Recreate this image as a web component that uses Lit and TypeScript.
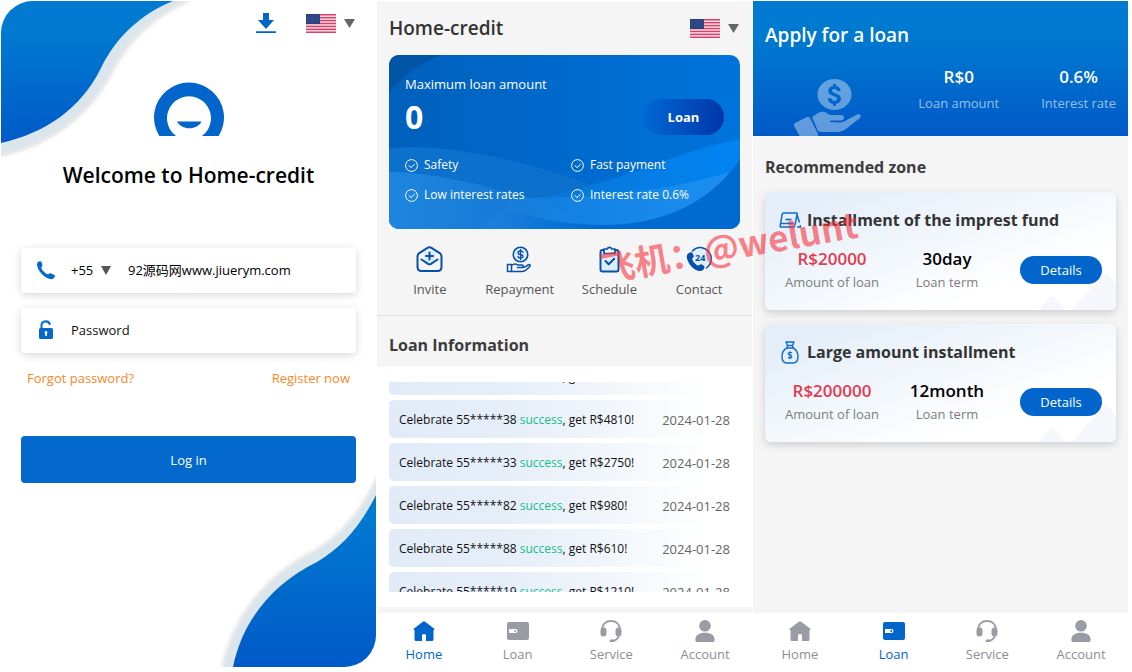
import { LitElement, html, css, svg } from "lit";
import { customElement, property } from "lit/decorators.js";
import { classMap } from "lit/directives/class-map.js";

const base = css`
  * {
    box-sizing: border-box;
  }
  :host {
    display: block;
    font-family: "Open Sans", "Noto Sans CJK SC", sans-serif;
    font-size: 13px;
    line-height: 20px;
  }
  h1,
  h2,
  h3,
  p,
  dl,
  dd,
  ul {
    margin: 0;
    padding: 0;
  }
  ul {
    list-style: none;
  }
  button,
  input,
  select {
    font: inherit;
    color: inherit;
    border: 0;
    margin: 0;
    padding: 0;
    background: none;
  }
  button {
    cursor: pointer;
  }
  a {
    color: inherit;
    text-decoration: none;
  }
  svg {
    display: block;
    flex: none;
  }
  .language {
    display: flex;
    align-items: center;
    gap: 8px;
  }
`;

const languageButton = html`
  <button class="language" type="button" aria-label="Language">
    <svg width="30" height="19" viewBox="0 0 30 19">
      <rect width="30" height="19" fill="#fbe3ea" />
      ${[0, 1, 2, 3, 4, 5, 6].map(
        (i) => svg`<rect y=${i * 2.92} width="30" height="1.5" fill="#d9416a" />`
      )}
      <rect width="14" height="10" fill="#27417f" />
      <path d="M2 2h11M1 4h12M2 6h11M1 8h12" stroke="#6478a8" stroke-width=".7" stroke-dasharray="1 1.5" />
    </svg>
    <svg width="11" height="9" viewBox="0 0 11 9"><path d="M0 0h11L5.500 9z" fill="#666" /></svg>
  </button>
`;

const check = html`
  <svg width="13" height="13" viewBox="0 0 13 13" fill="none" stroke="#fff">
    <circle cx="6.5" cy="6.5" r="5.9" />
    <path d="M3.700 6.300l2.300 2.300 3.800-3.600" />
  </svg>
`;

type Tab = "home" | "loan" | "service" | "account";

const tabs: { id: Tab; label: string; icon: unknown }[] = [
  {
    id: "home",
    label: "Home",
    icon: svg`<path fill="currentColor" fill-rule="evenodd" d="M10.200 1.500a1.300 1.300 0 0 1 1.600 0l9.500 7.300c.6.5.2 1.200-.4 1.200h-.4v9.500a1.500 1.500 0 0 1-1.500 1.500H3a1.500 1.500 0 0 1-1.500-1.500V10h-.4c-.6 0-1-.7-.4-1.200zM9 21h4v-5.500q0-1.500-1.500-1.500h-1Q9 14 9 15.500z"/>`,
  },
  {
    id: "loan",
    label: "Loan",
    icon: svg`<rect y="2" width="22" height="18" rx="2" fill="currentColor"/><path fill="#fff" d="M2 9h6.500a2 2 0 0 1 0 4H2z"/><circle cx="8.200" cy="11" r="1" fill="currentColor"/>`,
  },
  {
    id: "service",
    label: "Service",
    icon: svg`<path d="M2.200 9.500C2.200 4 6 1 11 1s8.800 3 8.800 8.500M19 15c-.8 3.500-3 5.500-6.500 6" fill="none" stroke="currentColor" stroke-width="1.800"/><rect x=".5" y="7.500" width="6" height="9" rx="3" fill="currentColor"/><rect x="15.500" y="7.500" width="6" height="9" rx="3" fill="currentColor"/><ellipse cx="12" cy="20.700" rx="2.500" ry="1.500" fill="currentColor"/>`,
  },
  {
    id: "account",
    label: "Account",
    icon: svg`<circle cx="11" cy="5.800" r="5.800" fill="currentColor"/><path fill="currentColor" d="M1.300 20c0-5 4-7.300 9.700-7.300s9.700 2.300 9.700 7.300c0 1.300-.7 2-2 2H3.300c-1.300 0-2-.7-2-2z"/>`,
  },
];

@customElement("tab-bar")
class TabBar extends LitElement {
  @property() active: Tab = "home";

  static styles = [
    base,
    css`
      .bar {
        display: grid;
        grid-template-columns: repeat(4, 1fr);
        height: 54px;
        padding-top: 7px;
        background: #fff;
        color: #9a9ba5;
      }
      .tab {
        display: flex;
        flex-direction: column;
        align-items: center;
        gap: 2px;
      }
      .label {
        color: #8e8e93;
      }
      .active,
      .active .label {
        color: #0165cc;
      }
    `,
  ];

  render() {
    return html`<nav class="bar">
      ${tabs.map(
        (tab) => html`<a
          href="#${tab.id}"
          class=${classMap({ tab: true, active: tab.id === this.active })}
        >
          <svg width="22" height="22" viewBox="0 0 22 22">${tab.icon}</svg>
          <span class="label">${tab.label}</span>
        </a>`
      )}
    </nav>`;
  }
}

@customElement("login-screen")
class LoginScreen extends LitElement {
  static styles = [
    base,
    css`
      :host {
        display: grid;
        grid-template: 1fr / 1fr;
        overflow: hidden;
        border-radius: 32px 0 32px 0;
        background: #fff;
      }
      .decor,
      .content {
        grid-area: 1 / 1;
        min-width: 0;
      }
      .decor {
        display: flex;
        flex-direction: column;
        justify-content: space-between;
      }
      .bottom {
        align-self: flex-end;
      }
      .content {
        z-index: 1;
        padding: 12px 20px;
      }
      .top {
        display: flex;
        justify-content: flex-end;
        align-items: center;
        gap: 30px;
        padding-right: 1px;
        height: 20px;
      }
      .logo {
        margin: 49px auto 0;
      }
      .title {
        margin-top: 22px;
        text-align: center;
        font-size: 21px;
        line-height: 32px;
        font-weight: 600;
      }
      .form {
        display: grid;
        gap: 15px;
        margin-top: 57px;
      }
      .field {
        display: flex;
        align-items: center;
        height: 45px;
        padding: 0 15px 1px;
        border-radius: 4px;
        background: #fff;
        box-shadow: 0 2px 8px rgba(0, 0, 0, 0.16);
      }
      .icon {
        width: 35px;
      }
      .prefix {
        display: flex;
        align-items: center;
        gap: 4px;
        margin-right: 17px;
      }
      .code {
        appearance: none;
        width: 26px;
      }
      .input {
        flex: 1;
        min-width: 0;
        outline: 0;
      }
      .input::placeholder {
        color: #111;
        opacity: 1;
      }
      .links {
        display: flex;
        justify-content: space-between;
        padding: 0 6px;
        color: #f5892a;
      }
      .submit {
        height: 47px;
        margin-top: 33px;
        border-radius: 4px;
        background: #0369cd;
        color: #fff;
      }
    `,
  ];

  render() {
    return html`
      <div class="decor" aria-hidden="true">
        <svg width="200" height="165" viewBox="0 0 200 165">
          <defs>
            <linearGradient id="top" x1="0" y1="0" x2="0" y2="1">
              <stop offset=".2" stop-color="#007ad0" />
              <stop offset="1" stop-color="#005ac8" />
            </linearGradient>
            <filter id="soft"><feDropShadow dx="1" dy="2" stdDeviation="2" flood-opacity=".15" /></filter>
          </defs>
          <path
            d="M-20 -20H205L186 -2C148 16 124 42 109 71C88 112 50 141 -1 153H-20z"
            fill="#dbe5ec"
            filter="url(#soft)"
          />
          <path d="M0 0H172C140 13 115 36 100 67C80 108 44 132 0 142z" fill="url(#top)" />
        </svg>
        <svg class="bottom" width="160" height="194" viewBox="0 0 160 194">
          <defs>
            <linearGradient id="low" x1="0" y1="0" x2="0" y2="1">
              <stop offset=".1" stop-color="#007ad0" />
              <stop offset="1" stop-color="#005ac8" />
            </linearGradient>
            <filter id="softer"><feDropShadow dx="-1" dy="-1" stdDeviation="2" flood-opacity=".15" /></filter>
          </defs>
          <path
            d="M180 -20L160 9C144 42 124 65 97 80C50 104 17 145 6 200H180z"
            fill="#dbe5ec"
            filter="url(#softer)"
          />
          <path d="M160 22C144 54 126 74 101 89C54 112 26 150 17 194H160z" fill="url(#low)" />
        </svg>
      </div>
      <div class="content">
        <div class="top">
          <button type="button" aria-label="Download">
            <svg width="20" height="20" viewBox="0 0 20 20">
              <path d="M7 0h6v7h5l-8 9-8-9h5zM0 18.300h20V20H0z" fill="#0165cc" />
            </svg>
          </button>
          ${languageButton}
        </div>
        <svg class="logo" width="70" height="55" viewBox="0 0 70 55">
          <path
            d="M5.300 54A35 35 0 1 1 64.700 54H48A22 22 0 1 0 22 54zM23 39.500H47.500C43.500 48.500 27.500 48.500 23 39.500z"
            fill="#0165cc"
          />
        </svg>
        <h1 class="title">Welcome to Home-credit</h1>
        <form class="form">
          <div class="field">
            <span class="icon">
              <svg width="20" height="20" viewBox="0 0 20 20">
                <path
                  d="M3.500 1.200L5 1.500c.7.200 1.500 3 1.400 4.300C6.300 6.600 5 7.200 5.400 8.200c1.200 2.800 3.600 4.800 6 6 1 .4 1.500-.8 2.500-1 1.200 0 4.800 1.600 5 2.300.3 1.500-1.400 3.600-3 3.700C9.500 19.500 1.500 11 1 5 .900 3 1.800 1.500 3.500 1.200z"
                  fill="#0569cc"
                />
              </svg>
            </span>
            <span class="prefix">
              <select class="code" aria-label="Country code"><option>+55</option></select>
              <svg width="10" height="9" viewBox="0 0 10 9"><path d="M0 0h10L5 9z" fill="#555" /></svg>
            </span>
            <input class="input" aria-label="Phone number" value="92源码网www.jiuerym.com" />
          </div>
          <label class="field">
            <span class="icon">
              <svg width="20" height="20" viewBox="0 0 20 20">
                <path d="M5.500 9V5.500a4.300 4.300 0 0 1 8.500-.8" fill="none" stroke="#0e74cf" stroke-width="2.200" />
                <rect x="3" y="8" width="14" height="11" rx="1.500" fill="#0767ca" />
                <path d="M10 11a1.500 1.500 0 0 1 .8 2.700V16H9.200v-2.300A1.500 1.500 0 0 1 10 11z" fill="#fff" />
              </svg>
            </span>
            <input class="input" type="password" placeholder="Password" aria-label="Password" />
          </label>
          <div class="links">
            <a href="#forgot">Forgot password?</a>
            <a href="#register">Register now</a>
          </div>
          <button class="submit" type="button">Log in</button>
        </form>
      </div>
    `;
  }
}

const shortcuts = [
  {
    label: "Invite",
    icon: svg`<path fill="#dfeeff" stroke="none" d="M8 5h12v10l-6 4-6-4z"/><path d="M1.500 10.500c0-1.500.6-2.500 1.800-3.300l8.200-5.300c1.300-.8 2.700-.8 4 0l8.200 5.300c1.200.8 1.800 1.800 1.800 3.300v10.500c0 2.500-1.500 4-4 4h-16c-2.500 0-4-1.500-4-4z" fill="none" stroke-width="2"/><path d="M5.500 13.500l6.500 4.300c1 .6 2 .6 3 0l6.500-4.300M13.500 6.500v7M10 10h7" fill="none" stroke-width="2"/>`,
  },
  {
    label: "Repayment",
    icon: svg`<circle cx="14.500" cy="8.500" r="7.300" fill="#dfeeff" stroke-width="1.600"/><path d="M17 6.300c-.5-1-1.300-1.300-2.500-1.300-3.300 0-3.300 3.200 0 3.500s3.300 3.500 0 3.500c-1.400 0-2.300-.5-2.600-1.500M14.500 3.500v10" fill="none" stroke-width="1.300"/><path d="M1.500 18.500h4v7h-4zM5.500 19.500c2-1.500 4.500-1.700 6-.5h4.500c1.800 0 1.800 2.400 0 2.400h-4.500M16.500 21.400c3-.2 4.500-2 6-2.700 1.400-.5 2.300.5 1.200 1.700-3 3.400-5 5.100-7.700 5.100H5.500" fill="none" stroke-width="1.500"/>`,
  },
  {
    label: "Schedule",
    icon: svg`<rect x="4.500" y="4" width="18" height="21.500" rx="2" fill="#dfeeff" stroke-width="1.900"/><path d="M8 3h3.300a2.300 2.300 0 0 1 4.400 0H19v4.500H8z" fill="#eef5ff" stroke-width="1.700"/><path d="M9.500 15l3.200 3.300 5.500-5.500" fill="none" stroke-width="2"/>`,
  },
  {
    label: "Contact",
    icon: svg`<circle cx="15" cy="12" r="9.500" fill="#dfeeff" stroke="none"/><path d="M6.500 5a11 11 0 0 1 18.800 7A11.500 11.500 0 0 1 20.500 22" fill="none" stroke-width="1.500" stroke-dasharray="14 1.200"/><path d="M3 7c1.500-1 3-1 3.700.6l1 2.400c.4 1.200-1.500 2-1.500 3 .3 2 3.300 5.500 5.500 6.500 1.400.4 2.200-1.600 3.600-1.200 1.300.4 2.600 1.300 3.200 2.500.5 1.800-1.800 4.300-4 4.300C8.500 25.500 1 17 .7 10.800c0-1.700.8-3 2.300-3.800z" fill="#0550ad" stroke="none"/><text x="9" y="15" font-size="9" font-weight="700" fill="#0550ad" stroke="none">24</text>`,
  },
];

const payouts = [
  { phone: "55*****61", amount: "R$3200" },
  { phone: "55*****38", amount: "R$4810" },
  { phone: "55*****33", amount: "R$2750" },
  { phone: "55*****82", amount: "R$980" },
  { phone: "55*****88", amount: "R$610" },
  { phone: "55*****19", amount: "R$1210" },
];

@customElement("home-screen")
class HomeScreen extends LitElement {
  static styles = [
    base,
    css`
      :host {
        display: flex;
        flex-direction: column;
        background: #f5f5f5;
        color: #333;
      }
      .header {
        display: flex;
        align-items: center;
        justify-content: space-between;
        height: 54px;
        padding: 0 13px 0 12px;
      }
      .title {
        font-size: 19px;
        line-height: 28px;
        font-weight: 600;
      }
      .card {
        display: grid;
        margin: 0 12px;
        height: 174px;
        border-radius: 10px;
        overflow: hidden;
        color: #fff;
      }
      .waves,
      .body {
        grid-area: 1 / 1;
        width: 100%;
        min-width: 0;
      }
      .waves {
        height: 174px;
      }
      .body {
        display: flex;
        flex-direction: column;
        padding: 19px 16px 0;
        z-index: 1;
      }
      .amount {
        display: flex;
        align-items: center;
        justify-content: space-between;
        height: 46px;
        font-size: 32px;
        font-weight: 700;
      }
      .loan {
        width: 81px;
        height: 36px;
        border-radius: 18px;
        background: linear-gradient(90deg, #0068d6, #0136a8);
        font-size: 13px;
        font-weight: 700;
      }
      .perks {
        display: grid;
        grid-template-columns: 166px 1fr;
        row-gap: 10px;
        margin-top: 15px;
        font-size: 12px;
        font-weight: 500;
      }
      .perk {
        display: flex;
        align-items: center;
        gap: 6px;
      }
      .shortcuts {
        display: grid;
        grid-template-columns: repeat(4, 1fr);
        padding: 17px 8px 16px;
        border-bottom: 1px solid #e0e0e0;
      }
      .shortcut {
        display: flex;
        flex-direction: column;
        align-items: center;
        gap: 6px;
        color: #555;
      }
      .shortcut svg {
        stroke: #0550ad;
      }
      .section {
        padding: 15px 12px;
        font-size: 16px;
        line-height: 28px;
        height: 51px;
        font-weight: 700;
        color: #3c3c3c;
      }
      .feed {
        flex: 1;
        padding: 15px 12px;
        margin-bottom: 6px;
        background: #fff;
      }
      .viewport {
        height: 210px;
        overflow: hidden;
      }
      .list {
        display: grid;
        gap: 5px;
        margin-top: -25px;
      }
      .row {
        display: flex;
        align-items: center;
        justify-content: space-between;
        height: 38px;
        padding: 1px 10px 0;
        border-radius: 5px;
        background: linear-gradient(90deg, #e1ebf7, #e6eef8 35%, #fff 92%);
        font-size: 12px;
        color: #111;
      }
      .ok {
        color: #13c08c;
      }
      .date {
        color: #666;
        font-size: 13px;
      }
    `,
  ];

  render() {
    return html`
      <header class="header">
        <h1 class="title">Home-credit</h1>
        ${languageButton}
      </header>
      <section class="card">
        <svg class="waves" viewBox="0 0 351 174" preserveAspectRatio="none" aria-hidden="true">
          <defs>
            <linearGradient id="sky" x1="0" y1="0" x2="1" y2="0">
              <stop offset="0" stop-color="#0060bc" />
              <stop offset="1" stop-color="#0073dc" />
            </linearGradient>
            <linearGradient id="foam" x1="0" y1="0" x2="1" y2="0">
              <stop offset="0" stop-color="#1f86df" />
              <stop offset="1" stop-color="#1f86df" stop-opacity="0" />
            </linearGradient>
            <linearGradient id="bright" x1="0" y1="0" x2="1" y2="0">
              <stop offset="0" stop-color="#0a74d4" />
              <stop offset="1" stop-color="#0084f2" />
            </linearGradient>
            <linearGradient id="crest" x1="0" y1="0" x2="1" y2="0">
              <stop offset="0" stop-color="#1b86e4" stop-opacity=".3" />
              <stop offset="1" stop-color="#1d8ef0" />
            </linearGradient>
            <linearGradient id="deep" x1="0" y1="0" x2="1" y2="0">
              <stop offset="0" stop-color="#006ad0" stop-opacity="0" />
              <stop offset=".4" stop-color="#006ad0" />
            </linearGradient>
          </defs>
          <rect width="351" height="174" fill="url(#sky)" />
          <path d="M0 0H52C30 9 14 20 0 38z" fill="#0055a7" />
          <path d="M0 93C65 88 130 105 202 130C240 142 290 140 320 134L300 174H0z" fill="#0c70cd" />
          <path d="M202 130C255 117 290 96 351 84V174H150C150 160 145 150 139 143C165 141 185 136 202 130z" fill="url(#bright)" />
          <path d="M122 143C210 143 280 136 340 117L330 174H90z" fill="url(#crest)" />
          <path d="M0 117C50 118 90 130 122 138C150 145 180 158 215 174H0z" fill="url(#foam)" />
          <path d="M351 104C320 150 270 170 215 170C180 170 150 165 110 152V174H351z" fill="url(#deep)" />
        </svg>
        <div class="body">
          <p>Maximum loan amount</p>
          <div class="amount">
            <span>0</span>
            <button class="loan" type="button">Loan</button>
          </div>
          <ul class="perks">
            ${["Safety", "Fast payment", "Low interest rates", "Interest rate 0.6%"].map(
              (text) => html`<li class="perk">${check}<span>${text}</span></li>`
            )}
          </ul>
        </div>
      </section>
      <nav class="shortcuts">
        ${shortcuts.map(
          (s) => html`<a class="shortcut" href="#${s.label.toLowerCase()}">
            <svg width="27" height="27" viewBox="0 0 27 27" stroke-linejoin="round" stroke-linecap="round">
              ${s.icon}
            </svg>
            <span>${s.label}</span>
          </a>`
        )}
      </nav>
      <h2 class="section">Loan Information</h2>
      <section class="feed">
        <div class="viewport">
          <ul class="list">
            ${payouts.map(
              (p) => html`<li class="row">
                <span>Celebrate ${p.phone} <span class="ok">success</span>, get ${p.amount}!</span>
                <time class="date">2024-01-28</time>
              </li>`
            )}
          </ul>
        </div>
      </section>
      <tab-bar active="home"></tab-bar>
    `;
  }
}

const products = [
  {
    name: "Installment of the imprest fund",
    amount: "R$20000",
    term: "30day",
    icon: svg`<path d="M16 18H2.200Q1 18 1.200 16.800L3.200 5.200Q3.500 4 4.700 4h12.600q1 0 .8 1l-2 10.500q-.2 1-1.200 1M2 14.500h13M17.500 4l3 9.500" stroke-width="1.500"/><path d="M6.500 10.500h6" stroke-width="1.600"/><path d="M18 18h3.500v-2" stroke-width="1.600"/>`,
  },
  {
    name: "Large amount installment",
    amount: "R$200000",
    term: "12month",
    icon: svg`<path d="M7 1h8l-1.500 3.500h-5zM7 7h8M8.500 4.500L8 7C5 8.500 3 12 3 15.500 3 20 5 22 8 22h6c3 0 5-2 5-6.500C19 12 17 8.500 14 7l-.5-2.500" stroke-width="1.400"/><path d="M13 12.300c-.5-.8-1-1-2-1-2.500 0-2.500 2.500 0 2.800s2.500 2.900 0 2.900c-1 0-1.800-.4-2-1.200M11 10.200v8" stroke-width="1.100"/>`,
  },
];

@customElement("loan-screen")
class LoanScreen extends LitElement {
  static styles = [
    base,
    css`
      :host {
        display: flex;
        flex-direction: column;
        background: #f5f5f5;
        color: #333;
      }
      .hero {
        height: 135px;
        padding: 20px 12px 0;
        overflow: hidden;
        background: linear-gradient(#007ad0 25%, #005ac8);
        color: #fff;
      }
      .title {
        font-size: 19px;
        line-height: 28px;
        font-weight: 600;
      }
      .summary {
        display: flex;
        align-items: flex-start;
        gap: 42px;
        padding-top: 16px;
      }
      .hand {
        margin: 14px auto 0 29px;
      }
      .stat {
        display: flex;
        flex-direction: column-reverse;
        align-items: center;
        gap: 1px;
      }
      .stat dd {
        font-size: 17px;
        line-height: 24px;
        font-weight: 600;
      }
      .hero .stat {
        gap: 4px;
      }
      .hero dt {
        color: rgba(255, 255, 255, 0.6);
      }
      .section {
        padding: 17px 12px 11px;
        font-size: 16px;
        line-height: 28px;
        font-weight: 700;
        color: #3c3c3c;
      }
      .products {
        display: grid;
        gap: 14px;
        flex: 1;
        align-content: start;
        padding: 0 12px;
      }
      .product {
        display: grid;
        border-radius: 6px;
        background: linear-gradient(160deg, #e4eef8 10%, #fff 75%);
        box-shadow: 0 3px 8px rgba(0, 0, 0, 0.16);
      }
      .peaks,
      .detail {
        grid-area: 1 / 1;
      }
      .peaks {
        place-self: end;
      }
      .detail {
        z-index: 1;
        height: 118px;
        padding: 14px 14px 0;
      }
      .name {
        display: flex;
        align-items: center;
        gap: 6px;
        font-size: 16px;
        line-height: 28px;
        font-weight: 700;
      }
      .name svg {
        fill: none;
        stroke: #0e6ccd;
        stroke-linejoin: round;
      }
      .figures {
        display: grid;
        grid-template-columns: 106fr 124fr 93fr;
        align-items: center;
        margin-top: 13px;
      }
      .figures dt {
        color: #7d7d7d;
      }
      .figures dd {
        color: #000;
      }
      .figures .money {
        color: #e53950;
      }
      .details {
        justify-self: end;
        width: 82px;
        height: 28px;
        border-radius: 14px;
        background: #0165cc;
        color: #fff;
      }
    `,
  ];

  render() {
    return html`
      <header class="hero">
        <h1 class="title">Apply for a loan</h1>
        <dl class="summary">
          <svg class="hand" width="68" height="60" viewBox="0 0 68 60" aria-hidden="true">
            <g fill="#fff" fill-opacity=".38">
              <path
                fill-rule="evenodd"
                d="M40.500 0a17 15.500 0 1 0 .01 0zM42 5v2c3 .5 4.500 2.300 4.700 5h-3.500c-1-3.500-5.700-2.500-5 .2.800 2.300 8.800 2.300 8.800 7.300 0 3-2 4.800-5 5.300v2h-3v-2c-3.300-.5-5-2.300-5.200-5.500h3.500c1 3.800 6.200 3 5.700 0-.6-2.600-8.700-2-8.700-7.200 0-2.800 1.700-4.500 4.700-5V5z"
              />
              <path d="M1 44l12-6q2-.5 3 1l8 16q.5 2-1 3l-11 6q-2 .5-3-1L0 47q-.5-2 1-3z" />
              <path
                d="M18 38l6-4q3-2 7-1l5 3h11c4 0 4 5 0 5.500H37q-2 .5-1 1.500l10 .5q3 0 6-2l11-6c3-1 5 1 3 3.500L52 50q-4 3-8 3H27l-3-1z"
              />
            </g>
          </svg>
          <div class="stat"><dt>Loan amount</dt><dd>R$0</dd></div>
          <div class="stat"><dt>Interest rate</dt><dd>0.6%</dd></div>
        </dl>
      </header>
      <h2 class="section">Recommended zone</h2>
      <div class="products">
        ${products.map(
          (p) => html`<article class="product">
            <svg class="peaks" width="78" height="38" viewBox="0 0 78 38" aria-hidden="true">
              <path d="M0 38l13-14q2-1 4 1l11 13zM33 38L66 2q2-2 4 0l8 11v19q0 6-6 6z" fill="#f5f7fd" />
            </svg>
            <div class="detail">
              <h3 class="name">
                <svg width="22" height="23" viewBox="0 0 22 23">${p.icon}</svg>
                ${p.name}
              </h3>
              <dl class="figures">
                <div class="stat"><dt>Amount of loan</dt><dd class="money">${p.amount}</dd></div>
                <div class="stat"><dt>Loan term</dt><dd>${p.term}</dd></div>
                <button class="details" type="button">Details</button>
              </dl>
            </div>
          </article>`
        )}
      </div>
      <tab-bar active="loan"></tab-bar>
    `;
  }
}

@customElement("app-root")
class AppRoot extends LitElement {
  static styles = [
    base,
    css`
      :host {
        background: #fff;
        overflow: hidden;
      }
      .screens {
        display: grid;
        grid-template-columns: repeat(3, 1fr);
        gap: 1px;
        min-height: 100vh;
        padding: 1px 4px 5px 1px;
      }
      .watermark {
        position: absolute;
        left: 598px;
        top: 221px;
        z-index: 2;
        font-family: "Noto Sans CJK SC", sans-serif;
        font-size: 35px;
        line-height: 48px;
        font-weight: 700;
        white-space: nowrap;
        color: rgba(250, 50, 60, 0.6);
        transform: rotate(-10deg);
        pointer-events: none;
      }
    `,
  ];

  render() {
    return html`
      <main class="screens">
        <login-screen></login-screen>
        <home-screen></home-screen>
        <loan-screen></loan-screen>
      </main>
      <div class="watermark">飞机：@welunt</div>
    `;
  }
}
